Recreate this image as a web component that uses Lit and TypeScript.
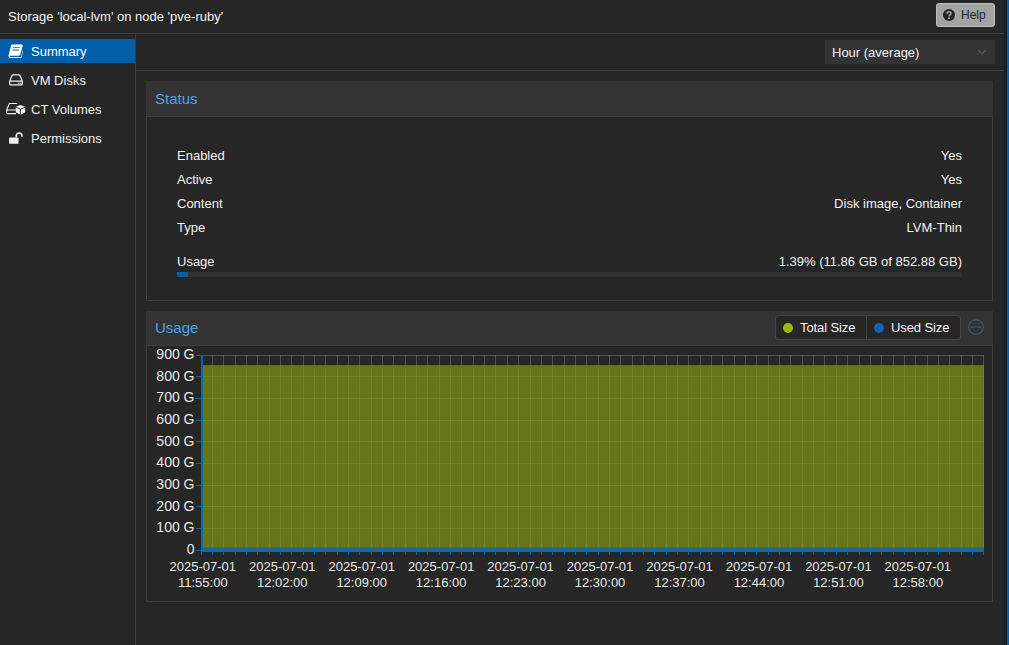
import { LitElement, html, css, svg } from "lit";
import { customElement } from "lit/decorators.js";

const PX = 201, PR = 984, PY0 = 355, PY1 = 550;
const yStep = (PY1 - PY0) / 9;
const xStep = 11.345;

function chart() {
  const w = 845, h = 255; // svg origin at (147, 346)
  const ox = 147, oy = 346;
  const vlines: any[] = [], ticksX: any[] = [], labelsX: any[] = [], hl: any[] = [], yl: any[] = [];
  for (let i = 0; PX + i * xStep <= PR; i++) {
    const x = PX + i * xStep - ox;
    vlines.push(svg`<line class="grid" x1=${x} x2=${x} y1=${PY0 - oy} y2=${PY1 - oy}></line>`);
    ticksX.push(svg`<line class="axis" x1=${x} x2=${x} y1=${PY1 - oy} y2=${PY1 - oy + 5}></line>`);
  }
  const times = ["11:55:00", "12:02:00", "12:09:00", "12:16:00", "12:23:00", "12:30:00", "12:37:00", "12:44:00", "12:51:00", "12:58:00"];
  times.forEach((t, i) => {
    const x = 202.8 + i * 79.45 - ox;
    labelsX.push(svg`<text class="lbl x" x=${x} y=${571 - oy} text-anchor="middle">2025-07-01</text>`);
    labelsX.push(svg`<text class="lbl x" x=${x} y=${587 - oy} text-anchor="middle">${t}</text>`);
  });
  for (let i = 0; i <= 9; i++) {
    const y = PY1 - i * yStep - oy;
    hl.push(svg`<line class="grid" x1=${PX - ox} x2=${PR - ox} y1=${y} y2=${y}></line>`);
    hl.push(svg`<line class="axis" x1=${PX - ox - 5} x2=${PX - ox} y1=${y} y2=${y}></line>`);
    yl.push(svg`<text class="lbl" x=${194.5 - ox} y=${PY1 - i * yStep + 3.9 - oy} text-anchor="end">${i === 0 ? "0" : `${i}00 G`}</text>`);
  }
  const topY = PY1 - (852.88 / 100) * yStep - oy;
  const usedY = 547.4 - oy;
  return html`<svg class="chart" width=${w} height=${h} viewBox="0 0 ${w} ${h}">
    ${vlines}${hl}
    <rect class="total" x=${PX - ox} y=${topY} width=${PR - PX} height=${PY1 - oy - topY}></rect>
    <rect class="used" x=${PX - ox} y=${usedY} width=${PR - PX} height=${551 - 547.4}></rect>
    <line class="axis thick" x1=${PX - ox + 1} x2=${PX - ox + 1} y1=${PY0 - oy} y2=${PY1 - oy + 2}></line>
    <line class="axis thick" x1=${PX - ox} x2=${PR - ox} y1=${PY1 - oy + 0.5} y2=${PY1 - oy + 0.5}></line>
    ${ticksX}${yl}${labelsX}
  </svg>`;
}

const iconBook = html`<svg width="15" height="14" viewBox="0 0 15 14"><path fill="currentColor" d="M4 .6h9.6c.8 0 1.2.6 1 1.4l-2.3 8.6c-.2.7-.8 1.2-1.6 1.2H2.6c-.5 0-.8.4-.7.7.1.3.4.5.8.5h9.6c.4 0 .7-.2.8-.6l2-7.2.4.6-2.1 7.6c-.2.8-.9 1.3-1.7 1.3H2.6C1.3 13.7.3 12.8.5 11.4c0-.3.1-.5.2-.7L3 1.8C3.1 1.2 3.5.6 4 .6zm1.3 2.6-.2.8h6.4l.2-.8H5.3zm-.7 2.4-.2.8h6.4l.2-.8H4.6z"/></svg>`;
const iconHdd = html`<svg width="14" height="12" viewBox="0 0 14 12"><path fill="none" stroke="currentColor" stroke-width="1.2" d="M.7 7.2 3 1.5c.1-.4.4-.7.9-.7h6.2c.5 0 .8.3.9.7l2.3 5.7v2.7c0 .6-.4 1-1 1H1.7c-.6 0-1-.4-1-1z M.7 7.2h12.6"/><path fill="currentColor" d="M9 8.6h1.2v1.2H9zM11 8.6h1.2v1.2H11z"/></svg>`;
const iconCt = html`<svg width="20" height="14" viewBox="0 0 20 14"><path fill="none" stroke="currentColor" stroke-width="1.1" d="M.7 8 3 2.2c.1-.4.4-.7.9-.7h7.4M.7 8v2.6c0 .6.4 1 1 1H10M.7 8H10"/><path fill="currentColor" d="M14.5 3 9.8 4.7v5.5l4.7 2.6 4.7-2.6V4.7z"/><path fill="none" stroke="#262626" stroke-width=".9" d="M9.8 5l4.7 2.2L19.2 5M14.5 7.2v5.6"/></svg>`;
const iconUnlock = html`<svg width="14" height="12" viewBox="0 0 14 12"><path fill="currentColor" d="M1 5.4h7.6c.5 0 .9.4.9.9v4.6c0 .5-.4.9-.9.9H1c-.5 0-.9-.4-.9-.9V6.3c0-.5.4-.9.9-.9z"/><path fill="none" stroke="currentColor" stroke-width="1.7" d="M7.3 5.500V3.7C7.3 2.1 8.5 1 10.1 1s2.9 1.200 2.900 2.800v.9"/></svg>`;

@customElement("app-root")
export class AppRoot extends LitElement {
  static styles = css`
    :host { display: block; position: relative; width: 1009px; height: 645px; background: #262626; color: #f2f2f2; font-family: "Liberation Sans", Arial, sans-serif; font-size: 13px; overflow: hidden; }
    .top { height: 33px; display: flex; align-items: center; justify-content: space-between; padding: 0 14px 0 8px; border-bottom: 1px solid #3d3d3d; font-size: 13px; }
    .help { display: flex; align-items: center; gap: 6px; box-sizing: border-box; width: 59px; height: 24px; padding-left: 6px; background: #a3a3a3; border: 1px solid #bdbdbd; border-radius: 3px; color: #242424; font-size: 12px; margin-top: -3px; }
    .help svg { display: block; }
    .main { display: flex; height: 611px; }
    .side { width: 135px; border-right: 1px solid #3d3d3d; padding-top: 5px; flex: none; }
    .item { height: 24px; margin-bottom: 5px; display: flex; align-items: center; color: #f2f2f2; }
    .item.on { background: #005fa8; color: #fff; }
    .ic { width: 31px; display: flex; justify-content: center; flex: none; box-sizing: border-box; }
    .content { flex: 1; min-width: 0; }
    .toolbar { height: 36px; border-bottom: 1px solid #3d3d3d; display: flex; align-items: center; justify-content: flex-end; padding-right: 14px; }
    .select { width: 170px; height: 24px; background: #333; display: flex; align-items: center; justify-content: space-between; padding: 0 8px 0 7px; box-sizing: border-box; font-size: 13px; }
    .body { padding: 10px 16px 0 10px; display: flex; flex-direction: column; gap: 10px; }
    .phead { height: 35px; background: #333; display: flex; align-items: center; padding: 0 9px; color: #4da3e0; font-size: 15px; box-sizing: border-box; justify-content: space-between; }
    .pbody { border: 1px solid #3d3d3d; }
    .status { padding: 26px 30px 24px 30px; height: 185px; box-sizing: border-box; }
    .row { height: 24px; display: flex; align-items: center; justify-content: space-between; }
    .urow { margin-top: 10px; height: 24px; display: flex; align-items: center; justify-content: space-between; }
    .bar { height: 5px; background: #333; margin-top: -1px; }
    .fill { height: 100%; background: #005fa8; }
    .usage-head { height: 34px; padding-right: 9px; padding-bottom: 2px; }
    .tools { display: flex; align-items: center; gap: 7px; }
    .legend { display: flex; height: 25px; box-sizing: border-box; border: 1px solid #454545; border-radius: 3px; background: #262626; color: #f2f2f2; font-size: 13px; }
    .leg { display: flex; align-items: center; width: 90px; box-sizing: border-box; padding-left: 7px; gap: 7px; letter-spacing: -.1px; }
    .leg + .leg { border-left: 1px solid #454545; width: 94px; }
    .dot { width: 10px; height: 10px; border-radius: 50%; margin-top: 2px; flex: none; }
    .dot.total { background: #9fb50f; }
    .dot.used { background: #0f62b5; }
    .chartbody { height: 255px; }
    .chart { display: block; }
    .chart .lbl { font-family: "Liberation Sans", Arial, sans-serif; font-size: 14px; fill: #e8e8e8; }
    .chart .lbl.x { font-size: 13px; }
    .chart .grid { stroke: rgba(255,255,255,.2); stroke-width: 1; shape-rendering: crispEdges; }
    .chart .total { fill: #7f9715; fill-opacity: .7; }
    .chart .used { fill: #23668a; }
    .chart .axis { stroke: #0b68b0; stroke-width: 1; shape-rendering: crispEdges; }
    .chart .axis.thick { stroke-width: 2; }
    .edge { position: absolute; left: 1004px; top: 0; width: 3px; height: 645px; background: #1e1e1e; }
    .edge2 { position: absolute; left: 1007px; top: 0; width: 2px; height: 645px; background: #005fa8; }
  `;

  render() {
    const rows = [["Enabled", "Yes"], ["Active", "Yes"], ["Content", "Disk image, Container"], ["Type", "LVM-Thin"]];
    return html`
      <div class="top">
        <span>Storage 'local-lvm' on node 'pve-ruby'</span>
        <div class="help"><svg width="12" height="12" viewBox="0 0 12 12"><circle cx="6" cy="6" r="6" fill="#242424"/><path fill="none" stroke="#a3a3a3" stroke-width="1.6" d="M4 4.700c0-1.200.9-1.900 2-1.900s2 .7 2 1.700c0 1.500-2 1.300-2 2.900"/><rect x="5.100" y="8.400" width="1.800" height="1.600" fill="#a3a3a3"/></svg>Help</div>
      </div>
      <div class="main">
        <nav class="side">
          <div class="item on"><span class="ic">${iconBook}</span>Summary</div>
          <div class="item"><span class="ic">${iconHdd}</span>VM Disks</div>
          <div class="item"><span class="ic">${iconCt}</span>CT Volumes</div>
          <div class="item"><span class="ic">${iconUnlock}</span>Permissions</div>
        </nav>
        <div class="content">
          <div class="toolbar">
            <div class="select">Hour (average)<svg width="10" height="6" viewBox="0 0 10 6"><path fill="none" stroke="#5a5a5a" stroke-width="1.200" d="M1 .8l4 4 4-4"/></svg></div>
          </div>
          <div class="body">
            <section>
              <div class="phead">Status</div>
              <div class="pbody status">
                ${rows.map((r) => html`<div class="row"><span>${r[0]}</span><span>${r[1]}</span></div>`)}
                <div class="urow"><span>Usage</span><span>1.39% (11.86 GB of 852.88 GB)</span></div>
                <div class="bar"><div class="fill" style="width:1.39%"></div></div>
              </div>
            </section>
            <section>
              <div class="phead usage-head">Usage
                <div class="tools">
                  <div class="legend">
                    <div class="leg"><span class="dot total"></span>Total Size</div>
                    <div class="leg"><span class="dot used"></span>Used Size</div>
                  </div>
                  <svg width="16" height="16" viewBox="0 0 16 16"><circle cx="8" cy="8" r="7.3" fill="none" stroke="#2f5f80" stroke-width="1.1"/><line x1="3" x2="13" y1="8" y2="8" stroke="#2f5f80" stroke-width="1.1"/></svg>
                </div>
              </div>
              <div class="pbody chartbody">${chart()}</div>
            </section>
          </div>
        </div>
      </div>
      <div class="edge"></div>
      <div class="edge2"></div>
    `;
  }
}
